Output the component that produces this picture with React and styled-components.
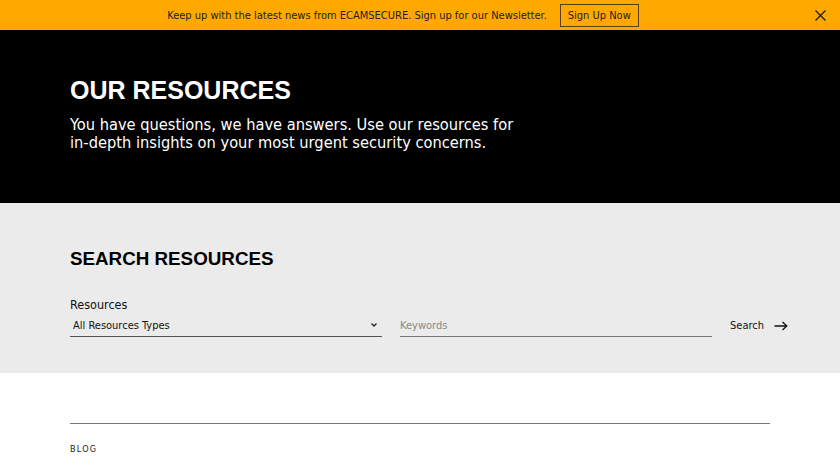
import React from "react";
import styled, { createGlobalStyle } from "styled-components";

const Global = createGlobalStyle`
  html, body { margin: 0; padding: 0; }
  body { font-family: "DejaVu Sans Condensed", "DejaVu Sans", sans-serif; background: #fff; }
  * { box-sizing: border-box; }
`;

const Banner = styled.div`
  height: 30px;
  background: #ffa800;
  display: flex;
  align-items: center;
  justify-content: center;
  position: relative;
  font-size: 11px;
  color: #222;
  gap: 13px;
  padding-right: 34px;
`;

const BannerText = styled.span``;

const SignUp = styled.button`
  font-family: "DejaVu Sans Condensed", "DejaVu Sans", sans-serif;
  font-size: 11px;
  color: #222;
  background: transparent;
  border: 1px solid #5a4000;
  height: 23px;
  padding: 0 7px;
  cursor: pointer;
`;

const Close = styled.button`
  position: absolute;
  right: 13px;
  top: 9px;
  background: none;
  border: none;
  padding: 0;
  width: 13px;
  height: 13px;
  display: flex;
`;

const Hero = styled.section`
  background: #000;
  color: #fff;
  height: 173px;
  padding-top: 45px;
`;

const Container = styled.div`
  width: 700px;
  margin: 0 auto;
`;

const Title = styled.h1`
  font-family: "Liberation Sans", Arial, sans-serif;
  font-weight: 700;
  font-size: 25px;
  margin: 0 0 11px;
  line-height: 30px;
`;

const Lead = styled.p`
  margin: 0;
  font-size: 16.3px;
  line-height: 18px;
  max-width: 455px;
`;

const SearchSection = styled.section`
  background: #ebebeb;
  height: 170px;
  padding-top: 45px;
`;

const SearchTitle = styled.h2`
  font-family: "Liberation Sans", Arial, sans-serif;
  font-weight: 700;
  font-size: 18.8px;
  margin: 0 0 27px;
  line-height: 22px;
`;

const Form = styled.div`
  display: flex;
  align-items: flex-end;
  gap: 18px;
`;

const Field = styled.div`
  display: flex;
  flex-direction: column;
  width: 312px;
  flex-shrink: 0;
`;

const Label = styled.label`
  font-size: 12.5px;
  line-height: 15px;
  color: #111;
  margin-bottom: 3px;
`;

const SelectBox = styled.div`
  height: 22px;
  border-bottom: 1px solid #555;
  display: flex;
  align-items: center;
  justify-content: space-between;
  padding: 0 4px 1px 3px;
  font-size: 11px;
  color: #111;
`;

const Input = styled.div`
  height: 22px;
  border-bottom: 1px solid #777;
  display: flex;
  align-items: center;
  padding: 0 0 1px 0;
  font-size: 11px;
  color: #888;
`;

const SearchBtn = styled.button`
  flex-shrink: 0;
  height: 22px;
  padding: 0 0 1px 0;
  background: none;
  border: none;
  display: flex;
  align-items: center;
  gap: 10px;
  font-family: "DejaVu Sans Condensed", "DejaVu Sans", sans-serif;
  font-size: 11px;
  color: #111;
`;

const Lower = styled.section`
  padding-top: 50px;
`;

const Rule = styled.hr`
  margin: 0;
  border: none;
  border-top: 1px solid #777;
`;

const Tag = styled.div`
  margin-top: 20px;
  font-size: 9px;
  line-height: 11px;
  letter-spacing: 1.2px;
  color: #222;
`;

export default function App() {
  return (
    <>
      <Global />
      <Banner>
        <BannerText>Keep up with the latest news from ECAMSECURE. Sign up for our Newsletter.</BannerText>
        <SignUp>Sign Up Now</SignUp>
        <Close aria-label="close">
          <svg width="13" height="13" viewBox="0 0 13 13">
            <path d="M1.5 1.5L11.5 11.5M11.5 1.5L1.5 11.5" stroke="#222" strokeWidth="1.4" fill="none" />
          </svg>
        </Close>
      </Banner>
      <Hero>
        <Container>
          <Title>OUR RESOURCES</Title>
          <Lead>You have questions, we have answers. Use our resources for in-depth insights on your most urgent security concerns.</Lead>
        </Container>
      </Hero>
      <SearchSection>
        <Container>
          <SearchTitle>SEARCH RESOURCES</SearchTitle>
          <Form>
            <Field>
              <Label>Resources</Label>
              <SelectBox>
                <span>All Resources Types</span>
                <svg width="8" height="6" viewBox="0 0 8 6">
                  <path d="M1.5 1.5L4 4L6.5 1.5" stroke="#222" strokeWidth="1.3" fill="none" />
                </svg>
              </SelectBox>
            </Field>
            <Field>
              <Input>Keywords</Input>
            </Field>
            <SearchBtn>
              Search
              <svg width="14" height="10" viewBox="0 0 14 10">
                <path d="M0.5 5H12.5M8.5 1L12.8 5L8.5 9" stroke="#111" strokeWidth="1.3" fill="none" />
              </svg>
            </SearchBtn>
          </Form>
        </Container>
      </SearchSection>
      <Lower>
        <Container>
          <Rule />
          <Tag>BLOG</Tag>
        </Container>
      </Lower>
    </>
  );
}
